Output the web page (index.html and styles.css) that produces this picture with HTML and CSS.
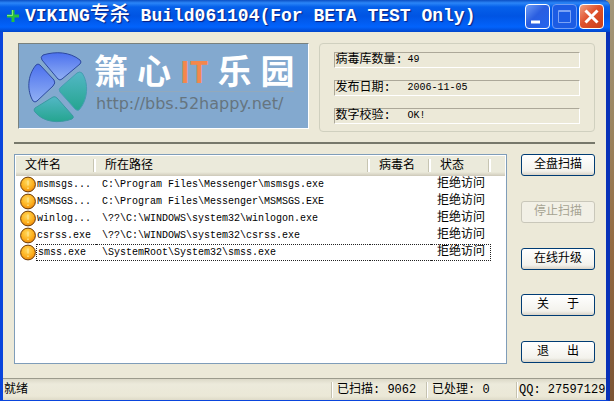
FILE: index.html
```html
<!DOCTYPE html>
<html lang="zh-CN">
<head>
<meta charset="utf-8">
<title>VIKING专杀</title>
<link rel="stylesheet" href="styles.css">
</head>
<body>
<svg class="defs" width="0" height="0" aria-hidden="true">
  <defs>
    <radialGradient id="amber" cx="0.45" cy="0.35" r="0.7">
      <stop offset="0" stop-color="#ffd95c"/><stop offset="0.6" stop-color="#fdb01e"/><stop offset="1" stop-color="#e98008"/>
    </radialGradient>
    <symbol id="alert" viewBox="0 0 16 16">
      <circle cx="8" cy="8" r="7.4" fill="url(#amber)" stroke="#6b3a08"/>
      <path d="M8 4v5M8 11v1.6" stroke="#ffe48c" stroke-width="1.4"/>
    </symbol>
  </defs>
</svg>
<div class="window">
  <header class="titlebar">
    <svg class="app-icon" viewBox="0 0 14 14" aria-hidden="true"><path d="M7 1v12M1 7h12" stroke="#27c43c" stroke-width="3"/><path d="M6.500 1v5.500H1" fill="none" stroke="#8be878"/></svg>
    <h1>VIKING<span class="cjk">专杀</span> Build061104(For BETA TEST Only)</h1>
    <div class="controls">
      <button class="ctl" type="button" aria-label="最小化"><svg viewBox="0 0 23 23"><path d="M5 17h9" stroke="#fff" stroke-width="3"/></svg></button>
      <button class="ctl ctl-off" type="button" aria-label="最大化" disabled><svg viewBox="0 0 23 23"><path d="M5.500 5.500h12v12h-12zM5 6.500h13" fill="none" stroke="#7ba3f5"/></svg></button>
      <button class="ctl ctl-close" type="button" aria-label="关闭"><svg viewBox="0 0 23 23"><path d="M5.500 5.500l12 12M17.500 5.500l-12 12" stroke="#fff" stroke-width="3"/></svg></button>
    </div>
  </header>
  <main class="client">
    <section class="top">
      <div class="banner">
        <svg class="logo" viewBox="0 0 64 76" aria-hidden="true">
          <defs>
            <linearGradient id="blue" x1="0" y1="0" x2="0" y2="1"><stop offset="0" stop-color="#4b70ee"/><stop offset="1" stop-color="#91b0f4"/></linearGradient>
            <linearGradient id="teal" x1="0" y1="0" x2="0" y2="1"><stop offset="0" stop-color="#53b7c6"/><stop offset="1" stop-color="#25a58f"/></linearGradient>
          </defs>
          <g stroke-linejoin="round">
            <path d="M16 7C29 3 43 4 53 12Q55 14 53 16L35 31Q33 33 31 31L15 12Q13 9 16 7Z" fill="url(#blue)" stroke="#2d499f"/>
            <path d="M9 17C0 28 0 43 6 53Q8 55 10 53L26 38Q29 35 27 32L13 17Q11 15 9 17Z" fill="url(#blue)" stroke="#2d499f"/>
            <path d="M55 25C62 35 61 52 52 62Q50 63 48 61L33 44Q31 41 34 39L50 25Q53 23 55 25Z" fill="url(#teal)" stroke="#479eb3"/>
            <path d="M8 60L26 49Q28 48 30 50L46 68Q47 70 45 71C31 76 16 74 8 64Q6 62 8 60Z" fill="url(#teal)" stroke="#3b99a2"/>
          </g>
        </svg>
        <div class="brand">
          <div class="brand-name"><span>箫</span><span>心</span><span class="it">IT</span><span>乐</span><span>园</span></div>
          <div class="brand-url">http://bbs.52happy.net/</div>
        </div>
      </div>
      <div class="info">
        <div class="field"><span class="key">病毒库数量:</span><span class="en">49</span></div>
        <div class="field"><span class="key">发布日期:</span><span class="en">2006-11-05</span></div>
        <div class="field"><span class="key">数字校验:</span><span class="en">OK!</span></div>
      </div>
    </section>
    <hr class="rule">
    <section class="work">
      <div class="list">
        <table>
          <colgroup><col class="c-icon"><col class="c-name"><col class="c-path"><col class="c-virus"><col class="c-state"><col></colgroup>
          <thead><tr><th colspan="2">文件名</th><th>所在路径</th><th>病毒名</th><th>状态</th><th class="fill"></th></tr></thead>
          <tbody>
            <tr><td class="icon"><svg><use href="#alert"/></svg></td><td class="en name">msmsgs...</td><td class="en path">C:\Program Files\Messenger\msmsgs.exe</td><td></td><td class="state">拒绝访问</td></tr>
            <tr><td class="icon"><svg><use href="#alert"/></svg></td><td class="en name">MSMSGS...</td><td class="en path">C:\Program Files\Messenger\MSMSGS.EXE</td><td></td><td class="state">拒绝访问</td></tr>
            <tr><td class="icon"><svg><use href="#alert"/></svg></td><td class="en name">winlog...</td><td class="en path">\??\C:\WINDOWS\system32\winlogon.exe</td><td></td><td class="state">拒绝访问</td></tr>
            <tr><td class="icon"><svg><use href="#alert"/></svg></td><td class="en name">csrss.exe</td><td class="en path">\??\C:\WINDOWS\system32\csrss.exe</td><td></td><td class="state">拒绝访问</td></tr>
            <tr class="focused"><td class="icon"><svg><use href="#alert"/></svg></td><td class="en name">smss.exe</td><td class="en path">\SystemRoot\System32\smss.exe</td><td></td><td class="state">拒绝访问</td></tr>
          </tbody>
        </table>
      </div>
      <div class="actions">
        <button type="button">全盘扫描</button>
        <button type="button" disabled>停止扫描</button>
        <button type="button">在线升级</button>
        <button type="button" class="spread"><span>关</span><span>于</span></button>
        <button type="button" class="spread"><span>退</span><span>出</span></button>
      </div>
    </section>
  </main>
  <footer class="status">
    <span class="ready">就绪</span><span class="scanned">已扫描: 9062</span><span class="handled">已处理: 0</span><span class="qq">QQ: 27597129</span>
  </footer>
</div>
</body>
</html>
```
FILE: styles.css
```css
* { box-sizing: border-box; }
body {
  margin: 0;
  padding-right: 4px;
  background: linear-gradient(#a3977a, #9b8560 30%, #946b42 60%, #7c5434);
  font: 12px/16px "Liberation Mono", "Noto Sans CJK SC", monospace;
  color: #000;
}
.defs { position: absolute; }
.window {
  display: flex;
  flex-direction: column;
  min-height: 100vh;
  border: solid #0a45dc;
  border-width: 0 4px 1px 3px;
  border-right-color: #0831b8;
  border-radius: 0 7px 0 0;
  background: #ece9d8;
}
.titlebar {
  display: flex;
  align-items: center;
  height: 32px;
  margin: 0 -4px 0 -3px;
  padding: 0 6px;
  gap: 5px;
  border-radius: 0 7px 0 0;
  background: linear-gradient(#0b4fc4, #2b86f8 3px, #0560ea 7px, #0054e3 16px, #0263fc 27px, #0146cb);
}
.app-icon { width: 14px; height: 14px; }
h1 {
  flex: 1;
  margin: 0;
  font-size: 18px;
  line-height: 24px;
  font-weight: 700;
  color: #fff;
  text-shadow: 1px 1px 1px #0a1f80;
  white-space: nowrap;
}
.cjk { font-size: 20px; font-weight: 500; }
.controls { display: flex; gap: 2px; }
.ctl {
  width: 25px;
  height: 25px;
  padding: 0;
  border: 1px solid #fff;
  border-radius: 4px;
  background: linear-gradient(135deg, #6d9cf6, #2a5ee0 45%, #2465ee);
}
.ctl svg { display: block; width: 23px; height: 23px; }
.ctl-off { border-color: #6f9cf3; background: #1c5ce4; }
.ctl-close { background: linear-gradient(135deg, #f0a083, #e0512c 45%, #c93f1a); }
.client { flex: 1; padding: 11px 11px 14px; }
.top { display: flex; gap: 10px; padding-left: 4px; }
.banner {
  display: flex;
  flex: 292px 1 1;
  height: 86px;
  gap: 3px;
  padding: 4px 14px 4px 8px;
  border: 1px solid;
  border-color: #79817e #fff #fff #79817e;
  background: #83a9cf;
}
.logo { width: 64px; height: 76px; }
.brand { flex: 1; }
.brand-name {
  display: flex;
  justify-content: space-between;
  align-items: center;
  height: 44px;
  border-bottom: 1px solid #93a9bb;
  font: 700 34px/40px "Noto Sans CJK SC", sans-serif;
  color: #fff;
}
.it { color: #f4874b; font-size: 30px; }
.brand-url { padding-left: 2px; font: 16px/24px "DejaVu Sans", sans-serif; color: #66757f; }
.info {
  display: flex;
  flex: 276px 1 1;
  flex-direction: column;
  gap: 12px;
  height: 89px;
  padding: 8px 14px;
  border: 1px solid #d0d0bf;
  border-radius: 4px;
}
.field {
  display: flex;
  height: 16px;
  border: 1px solid;
  border-color: #aca899 #fff #fff #aca899;
  line-height: 14px;
}
.key { flex: none; width: 72px; white-space: nowrap; }
.en { font-size: 10px; }
.rule { height: 2px; margin: 10px 0; border: 0; background: #77786b; }
.work { display: flex; gap: 14px; }
.list {
  flex: 1;
  height: 210px;
  border: 1px solid #7f9db9;
  background: #fff;
  padding: 1px;
  overflow: hidden;
}
table { width: 100%; table-layout: fixed; border-collapse: separate; border-spacing: 0; }
.c-icon { width: 20px; }
.c-name { width: 60px; }
.c-path { width: 274px; }
.c-virus { width: 61px; }
.c-state { width: 60px; }
th {
  position: relative;
  height: 20px;
  padding: 0 0 0 9px;
  background: linear-gradient(#ebeadb 16px, #d6d2c2 19px, #cbc7b8);
  font-weight: 400;
  line-height: 18px;
  text-align: left;
}
th::after {
  content: "";
  position: absolute;
  top: 3px;
  right: 0;
  width: 2px;
  height: 13px;
  border-left: 1px solid #c7c5b2;
  background: #fff;
}
th.fill::after { display: none; }
td {
  height: 17px;
  padding: 0;
  border: 0 solid transparent;
  border-width: 1px 0;
  line-height: 15px;
  white-space: nowrap;
}
.icon { padding-left: 4px; overflow: visible; }
.icon svg { display: block; width: 16px; height: 17px; margin: -1px 0; }
.name { padding-left: 1px; }
.path { padding-left: 6px; }
.state { padding-left: 6px; }
.focused td:not(.icon) { border-color: #222; border-style: dotted; }
.focused .name { border-left-width: 1px; }
.focused .state { border-right-width: 1px; }
.actions { display: flex; flex-direction: column; justify-content: space-between; width: 74px; height: 209px; }
.actions button {
  height: 22px;
  padding: 0;
  border: 1px solid #003c74;
  border-radius: 3px;
  background: linear-gradient(#fff, #f3f2ec 80%, #d9d4c8);
  font: inherit;
  line-height: 18px;
  color: #000;
}
.actions button:disabled { border-color: #c9c7ba; background: #f2f0e6; color: #a6a392; }
.actions .spread { display: flex; justify-content: space-between; align-items: center; padding: 0 15px; }
.status {
  display: flex;
  align-items: center;
  height: 22px;
  border-top: 1px solid #9c9b8c;
  background: linear-gradient(#dcd9c8, #eceadb 5px, #ebe8d7 17px, #dedac8);
  white-space: nowrap;
}
.status span { height: 16px; padding-left: 5px; border-left: 1px solid #c5c2b0; box-shadow: inset 1px 0 #fff; }
.status .ready { flex: 1; padding-left: 1px; border: 0; box-shadow: none; }
.scanned { width: 95px; }
.handled { width: 90px; }
.status .qq { width: 90px; padding-left: 2px; }
```
